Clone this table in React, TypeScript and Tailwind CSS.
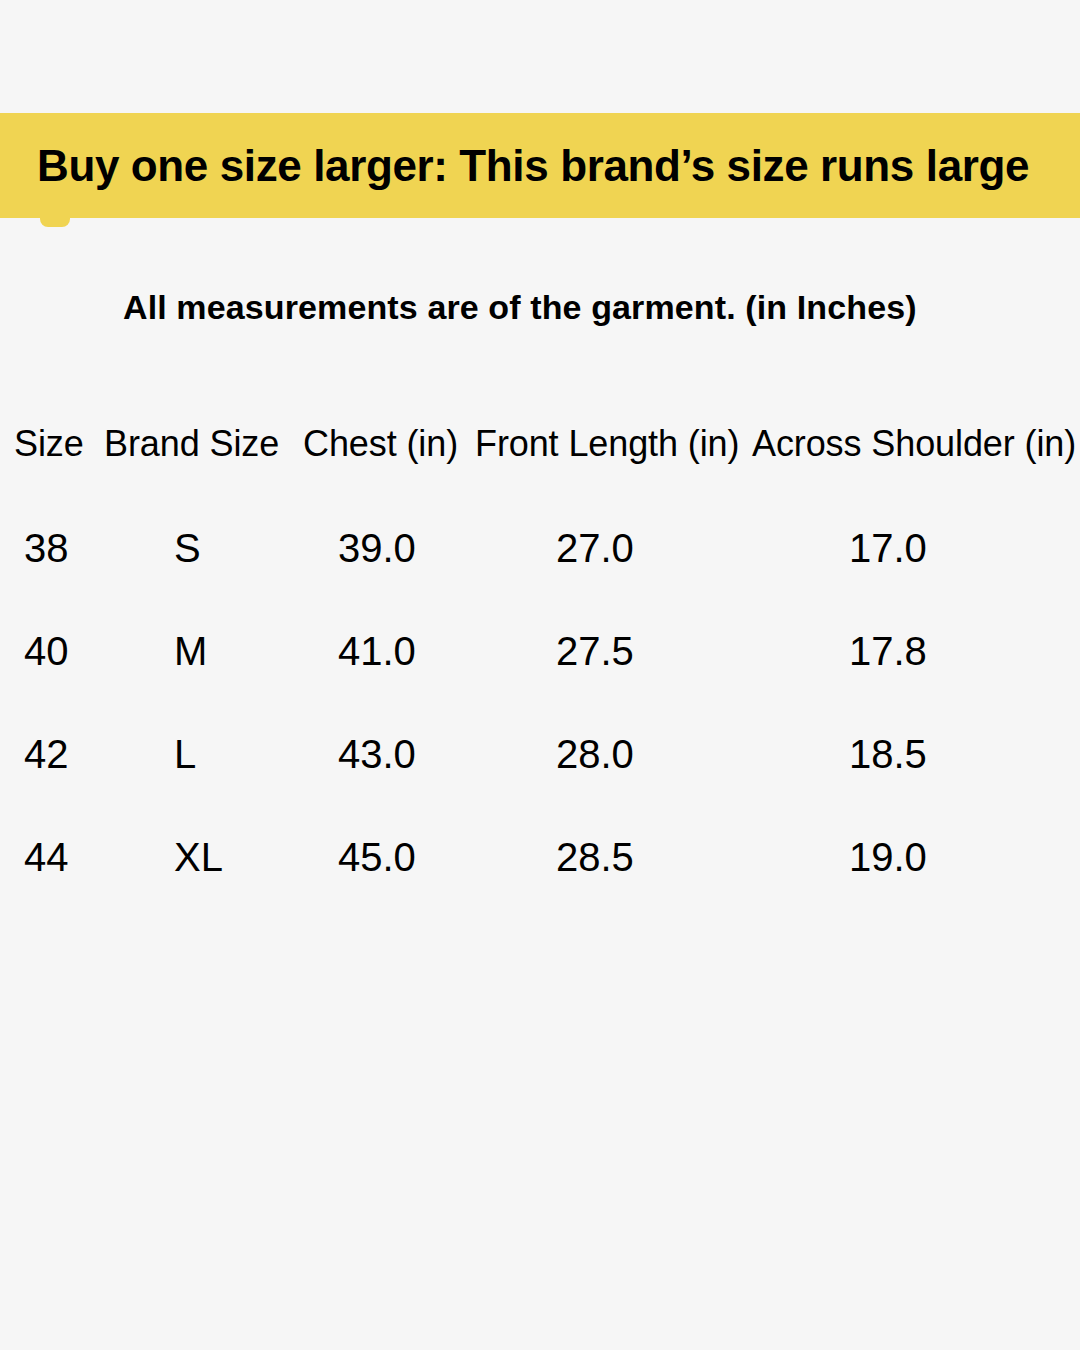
import React from 'react'

const rows = [
  { size: '38', brand: 'S', chest: '39.0', length: '27.0', shoulder: '17.0' },
  { size: '40', brand: 'M', chest: '41.0', length: '27.5', shoulder: '17.8' },
  { size: '42', brand: 'L', chest: '43.0', length: '28.0', shoulder: '18.5' },
  { size: '44', brand: 'XL', chest: '45.0', length: '28.5', shoulder: '19.0' },
]

export default function App() {
  return (
    <div
      className="relative h-[1350px] w-[1080px] overflow-hidden bg-[#f6f6f6] text-black"
      style={{ fontFamily: '"Liberation Sans", Arial, sans-serif' }}
    >
      {/* yellow banner */}
      <div className="relative mt-[113px] flex h-[105px] items-center bg-[#f0d452] pl-[37px]">
        <h1 className="whitespace-nowrap text-[44px] font-bold leading-none tracking-[-0.38px]">
          Buy one size larger: This brand’s size runs large
        </h1>
        <div className="absolute left-[40px] top-[104px] h-[10px] w-[30px] rounded-b-[8px] bg-[#f0d452]" />
      </div>

      <p className="mt-[72px] whitespace-nowrap pl-[123px] text-[34px] font-bold leading-none tracking-[0.12px]">
        All measurements are of the garment. (in Inches)
      </p>

      <div className="mt-[102px] flex whitespace-nowrap pl-[14px] text-[36px] leading-none tracking-[-0.1px]">
        <span className="w-[90px]">Size</span>
        <span className="w-[199px]">Brand Size</span>
        <span className="w-[172px]">Chest (in)</span>
        <span className="w-[277px]">Front Length (in)</span>
        <span>Across Shoulder (in)</span>
      </div>

      <div className="mt-[66px] flex flex-col gap-[63px] text-[40px] leading-none">
        {rows.map((r) => (
          <div key={r.size} className="flex pl-[24px]">
            <span className="w-[150px]">{r.size}</span>
            <span className="w-[164px]">{r.brand}</span>
            <span className="w-[218px]">{r.chest}</span>
            <span className="w-[293px]">{r.length}</span>
            <span>{r.shoulder}</span>
          </div>
        ))}
      </div>
    </div>
  )
}
